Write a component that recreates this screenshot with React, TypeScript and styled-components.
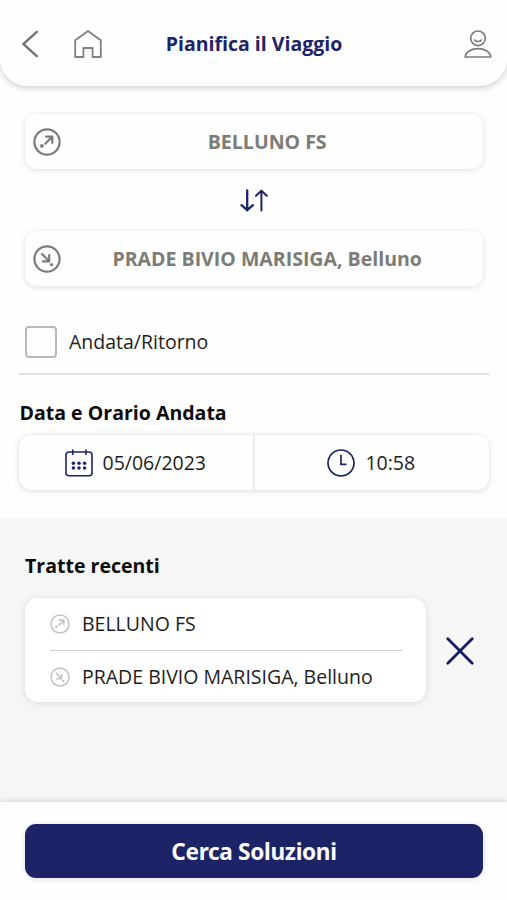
import React from "react";
import styled, { createGlobalStyle } from "styled-components";

const NAVY = "#1c2467";
const GREY = "#7c7c76";

const GlobalStyle = createGlobalStyle`
  *, *::before, *::after { box-sizing: border-box; }
  body { margin: 0; background: #fefefe; }
  button { font: inherit; color: inherit; border: 0; padding: 0; background: none; cursor: pointer; }
  svg { display: block; flex: none; }
`;

const Screen = styled.div`
  display: flex;
  flex-direction: column;
  width: 100%;
  height: 900px;
  overflow: hidden;
  background: #fefefe;
  color: #1d1d1d;
  font-family: "Open Sans", "Noto Sans", sans-serif;
  font-size: 19.5px;
  line-height: 28px;
  white-space: nowrap;
`;

const Header = styled.header`
  flex: none;
  display: grid;
  grid-template-columns: 119px 1fr 124px;
  align-items: center;
  height: 86px;
  padding: 2px 15px 0 21px;
  border-radius: 0 0 27px 27px;
  background: #fefefe;
  box-shadow: 0 2px 6px rgba(0, 0, 0, 0.2);
`;

const HeaderActions = styled.div<{ $end?: boolean }>`
  display: flex;
  align-items: center;
  gap: 35px;
  justify-content: ${(p) => (p.$end ? "flex-end" : "flex-start")};
`;

const Title = styled.h1`
  margin: 0;
  color: ${NAVY};
  font-size: 19.5px;
  font-weight: 700;
  text-align: center;
`;

const Planner = styled.main`
  flex: none;
  display: flex;
  flex-direction: column;
  height: 432px;
  padding: 28px 18px 0 19px;
`;

const StopField = styled.button`
  display: grid;
  grid-template-columns: 28px 1fr;
  align-items: center;
  height: 55px;
  margin: 0 6px;
  padding: 0 10px 0 8.4px;
  border-radius: 12px;
  background: #fefefe;
  color: ${GREY};
  font-weight: 700;
  font-size: 19.55px;
  box-shadow: 0 1px 6px rgba(0, 0, 0, 0.13);
`;

const SwapButton = styled.button`
  align-self: center;
  display: flex;
  align-items: center;
  height: 62px;
  padding-top: 1px;
`;

const RoundTrip = styled.label`
  display: flex;
  align-items: center;
  gap: 12px;
  height: 89px;
  padding: 24px 0 0 6px;
  border-bottom: 2px solid #dedede;
`;

const Checkbox = styled.span`
  width: 32px;
  height: 32px;
  border: 2px solid #b9b9b9;
  border-radius: 4px;
`;

const Heading = styled.h2`
  margin: 0;
  color: #0b0b0b;
  font-size: 19.55px;
  line-height: 28px;
  font-weight: 700;
`;

const DepartureHeading = styled(Heading)`
  padding: 24px 0 0 0.5px;
`;

const DateTimeCard = styled.div`
  display: grid;
  grid-template-columns: 236px 1fr;
  height: 55px;
  margin-top: 8px;
  border-radius: 13px;
  box-shadow: 0 1px 6px rgba(0, 0, 0, 0.15);
`;

const DateTimeCell = styled.button<{ $divided?: boolean }>`
  display: flex;
  align-items: center;
  justify-content: center;
  gap: 10px;
  padding-right: 1.5px;
  border-right: ${(p) => (p.$divided ? "2px solid #ededed" : "0")};
`;

const Recents = styled.section`
  flex: 1;
  padding: 34px 18px 0 25px;
  background: #f6f6f6;
`;

const RecentRow = styled.div`
  display: flex;
  align-items: center;
  gap: 20.4px;
  margin-top: 18px;
`;

const RecentCard = styled.div`
  width: 401px;
  height: 104px;
  padding: 0 24px 0 25px;
  border-radius: 13px;
  background: #fff;
  box-shadow: 0 1px 6px rgba(0, 0, 0, 0.12);
`;

const RecentStop = styled.div<{ $divided?: boolean }>`
  display: flex;
  align-items: center;
  gap: 12px;
  height: ${(p) => (p.$divided ? "53px" : "51px")};
  border-bottom: ${(p) => (p.$divided ? "1px solid #cfcfcf" : "0")};
`;

const RemoveButton = styled.button`
  padding-top: 2px;
`;

const Footer = styled.footer`
  flex: none;
  position: relative;
  height: 98px;
  padding: 22px 24px 0 25px;
  background: #fefefe;
  box-shadow: 0 -1px 5px rgba(0, 0, 0, 0.15);
`;

const SearchButton = styled.button`
  width: 100%;
  height: 54px;
  padding-top: 2px;
  border-radius: 11px;
  background: ${NAVY};
  color: #fff;
  font-family: "Noto Sans", "Open Sans", sans-serif;
  font-size: 22.6px;
  font-weight: 700;
  letter-spacing: -0.32px;
  box-shadow: 0 1px 6px rgba(0, 0, 0, 0.12);
`;

const Back = () => (
  <svg width="18" height="28" viewBox="0 0 18 28" fill="none" stroke="#777773" strokeWidth="2.4" strokeLinecap="round" strokeLinejoin="round">
    <path d="M15.8 1.8 2.4 14 15.8 26.2" />
  </svg>
);

const Home = () => (
  <svg width="28" height="28" viewBox="0 0 28 28" fill="none" stroke="#80807c" strokeWidth="1.8" strokeLinejoin="round">
    <path d="M1.2 27V10.3L14 1l12.8 9.3V27h-8.2V18H9.4v9Z" />
  </svg>
);

const Profile = () => (
  <svg width="28" height="28" viewBox="0 0 28 28" fill="none" stroke="#7c7c78" strokeWidth="1.7" strokeLinecap="round" strokeLinejoin="round">
    <circle cx="14" cy="8.3" r="7.3" />
    <path d="M10.7 10.2c1.8 1.7 4.8 1.7 6.6 0" />
    <path d="M1.2 27C2.2 15.8 25.8 15.8 26.8 27Z" />
  </svg>
);

const StopIcon = ({ arrival = false, size = 28, color = GREY }: { arrival?: boolean; size?: number; color?: string }) => (
  <svg width={size} height={size} viewBox="0 0 28 28" fill="none" stroke={color} strokeWidth="2.2" strokeLinecap="round" strokeLinejoin="round">
    <circle cx="14" cy="14" r="12.6" />
    {arrival ? (
      <>
        <path d="m9 9 7.2 7.2M16.2 10.2v6.2H9.8" />
        <circle cx="18.5" cy="19.6" r="1.7" fill={color} stroke="none" />
      </>
    ) : (
      <>
        <path d="m12.3 15.8 7-7.2M13 8.6h6.3v6.2" />
        <circle cx="8.9" cy="17.9" r="1.9" fill={color} stroke="none" />
      </>
    )}
  </svg>
);

const Swap = () => (
  <svg width="28" height="24" viewBox="0 0 28 24" fill="none" stroke={NAVY} strokeLinecap="round" strokeLinejoin="round">
    <path strokeWidth="2.3" d="M7.2 1.5v20M1.5 16.2l5.7 5 5.7-5" />
    <path strokeWidth="2" d="M21.4 21.5V1.7M16 6.8l5.4-5.1 5.4 5.1" />
  </svg>
);

const Calendar = () => (
  <svg width="28" height="28" viewBox="0 0 28 28" fill="none" stroke={NAVY} strokeWidth="1.6" strokeLinecap="round">
    <rect x="1" y="3" width="26" height="23.8" rx="3" />
    <path d="M7.7 1v4.4M21 1v4.4" />
    <g fill={NAVY} stroke="none">
      {[8.4, 14, 19.6].map((x) => (
        <React.Fragment key={x}>
          <circle cx={x} cy="14.2" r="1.75" />
          <circle cx={x} cy="19" r="1.75" />
        </React.Fragment>
      ))}
    </g>
  </svg>
);

const Clock = () => (
  <svg width="28" height="28" viewBox="0 0 28 28" fill="none" stroke={NAVY} strokeWidth="1.7">
    <circle cx="14" cy="14" r="13" />
    <path d="M14 5.7v9.6h5.5" />
  </svg>
);

const Close = () => (
  <svg width="28" height="28" viewBox="0 0 28 28" fill="none" stroke="#151b60" strokeWidth="2.8" strokeLinecap="round">
    <path d="m1.8 1.8 24.4 24.4M26.2 1.8 1.8 26.2" />
  </svg>
);

export default function App() {
  return (
    <>
      <GlobalStyle />
      <Screen>
        <Header>
          <HeaderActions>
            <button aria-label="Indietro"><Back /></button>
            <button aria-label="Home"><Home /></button>
          </HeaderActions>
          <Title>Pianifica il Viaggio</Title>
          <HeaderActions $end>
            <button aria-label="Profilo"><Profile /></button>
          </HeaderActions>
        </Header>
        <Planner>
          <StopField><StopIcon /><span>BELLUNO FS</span></StopField>
          <SwapButton aria-label="Inverti"><Swap /></SwapButton>
          <StopField><StopIcon arrival /><span>PRADE BIVIO MARISIGA, Belluno</span></StopField>
          <RoundTrip><Checkbox /><span>Andata/Ritorno</span></RoundTrip>
          <DepartureHeading>Data e Orario Andata</DepartureHeading>
          <DateTimeCard>
            <DateTimeCell $divided><Calendar /><span>05/06/2023</span></DateTimeCell>
            <DateTimeCell><Clock /><span>10:58</span></DateTimeCell>
          </DateTimeCard>
        </Planner>
        <Recents>
          <Heading>Tratte recenti</Heading>
          <RecentRow>
            <RecentCard>
              <RecentStop $divided><StopIcon size={20} color="#c4c4c4" /><span>BELLUNO FS</span></RecentStop>
              <RecentStop><StopIcon arrival size={20} color="#c4c4c4" /><span>PRADE BIVIO MARISIGA, Belluno</span></RecentStop>
            </RecentCard>
            <RemoveButton aria-label="Rimuovi"><Close /></RemoveButton>
          </RecentRow>
        </Recents>
        <Footer>
          <SearchButton>Cerca Soluzioni</SearchButton>
        </Footer>
      </Screen>
    </>
  );
}
